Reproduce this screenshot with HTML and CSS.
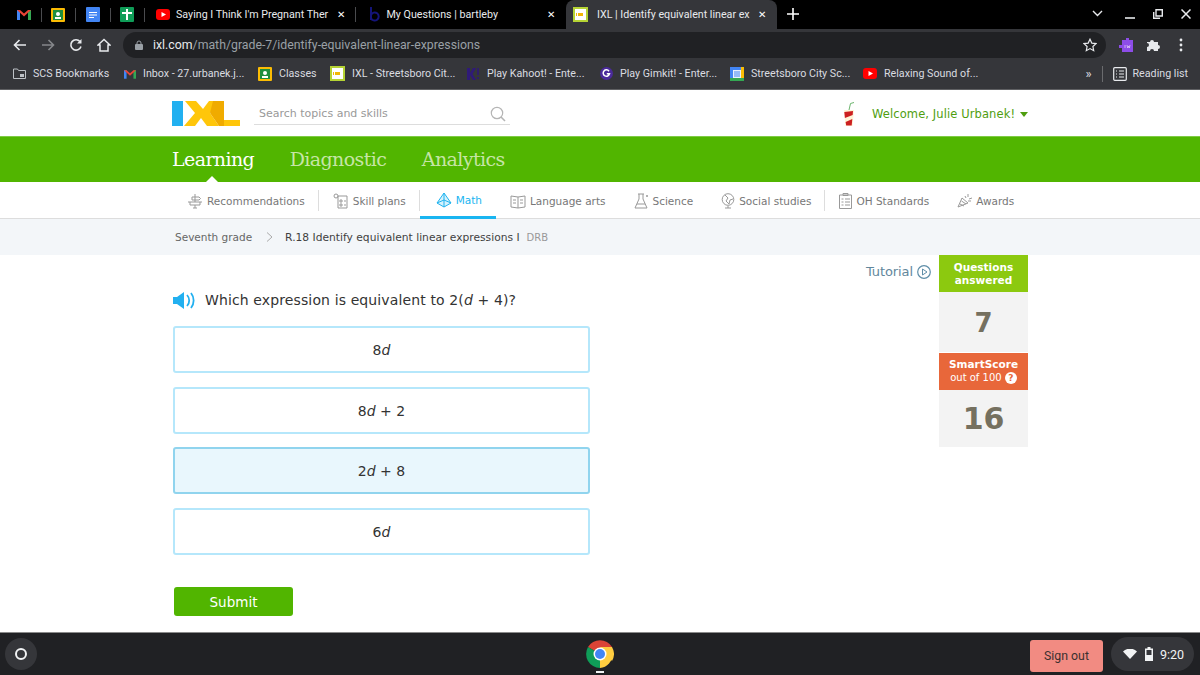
FILE: index.html
```html
<!DOCTYPE html>
<html lang="en">
<head>
  <meta charset="UTF-8">
  <title>IXL | Identify equivalent linear expressions</title>
  <link rel="stylesheet" href="styles.css">
</head>
<body>

  <!-- Browser tabs -->
  <div class="tabstrip">
    <div class="pinned">
      <svg width="14" height="11" viewBox="0 0 14 11"><path d="M0 11V1l3 0v10z" fill="#4285f4"/><path d="M11 11V1h3v10z" fill="#34a853"/><path d="M0 1h3l4 3.5L11 1h3L7 7.5z" fill="#ea4335"/></svg>
    </div>
    <div class="pinned">
      <svg width="14" height="14" viewBox="0 0 14 14"><rect width="14" height="14" rx="1" fill="#fbbc04"/><rect x="2" y="2" width="10" height="10" fill="#1e8e3e"/><circle cx="7" cy="6" r="2" fill="#fff"/><rect x="4" y="9" width="6" height="2" fill="#fff"/></svg>
    </div>
    <div class="pinned">
      <svg width="14" height="15" viewBox="0 0 14 15"><rect width="14" height="15" rx="1" fill="#4285f4"/><path d="M3 5h8v1H3zM3 7.500h8v1H3zM3 10h5v1H3z" fill="#fff"/></svg>
    </div>
    <div class="pinned">
      <svg width="14" height="15" viewBox="0 0 14 15"><rect width="14" height="15" rx="1" fill="#0f9d58"/><path d="M6 2h2v3h4v2H8v6H6V7H2V5h4z" fill="#fff"/></svg>
    </div>
    <div class="tab sep">
      <svg class="fav" width="14" height="11" viewBox="0 0 14 11"><rect width="14" height="11" rx="3" fill="#f00"/><path d="M5.500 3v5L10 5.500z" fill="#fff"/></svg>
      <span class="tab-title">Saying I Think I'm Pregnant Ther</span>
      <span class="tab-x">✕</span>
    </div>
    <div class="tab">
      <svg class="fav" width="14" height="16" viewBox="0 0 14 16"><path d="M4 1v13M4 9a4 4 0 1 1 0 3" fill="none" stroke="#14147a" stroke-width="2"/></svg>
      <span class="tab-title">My Questions | bartleby</span>
      <span class="tab-x">✕</span>
    </div>
    <div class="tab active">
      <svg class="fav" width="15" height="15" viewBox="0 0 15 15"><rect width="15" height="15" fill="#b5d334"/><rect x="2" y="2" width="11" height="11" fill="#fff"/><path d="M3 6h1v3H3zM5 6h5v3H5z" fill="#f2b705"/></svg>
      <span class="tab-title">IXL | Identify equivalent linear ex</span>
      <span class="tab-x">✕</span>
    </div>
    <svg class="new-tab" width="12" height="12" viewBox="0 0 12 12"><path d="M6 0v12M0 6h12" stroke="#fff" stroke-width="1.600"/></svg>
    <div class="win-btns">
      <svg class="win-list" width="11" height="7" viewBox="0 0 11 7"><path d="M1 1l4.500 4.500L10 1" fill="none" stroke="#e8eaed" stroke-width="1.400"/></svg>
      <svg width="10" height="10" viewBox="0 0 10 10"><path d="M0 9h10" stroke="#e8eaed" stroke-width="1.600"/></svg>
      <svg width="10" height="10" viewBox="0 0 10 10"><path d="M3 .7h6.300V7H3zM.7 3v6.300H7" fill="none" stroke="#e8eaed" stroke-width="1.400"/></svg>
      <svg width="10" height="10" viewBox="0 0 10 10"><path d="M.5.500l9 9M9.500.500l-9 9" stroke="#e8eaed" stroke-width="1.500"/></svg>
    </div>
  </div>

  <!-- Address bar -->
  <div class="toolbar">
    <svg class="tb-ico" width="14" height="12" viewBox="0 0 14 12"><path d="M13 6H2M6.500 1L1.500 6l5 5" fill="none" stroke="#e8eaed" stroke-width="1.600"/></svg>
    <svg class="tb-ico" width="14" height="12" viewBox="0 0 14 12"><path d="M1 6h11M7.500 1l5 5-5 5" fill="none" stroke="#85878a" stroke-width="1.600"/></svg>
    <svg class="tb-ico" width="14" height="14" viewBox="0 0 14 14"><path d="M12 8.500A5.200 5.200 0 1 1 11 3.500" fill="none" stroke="#e8eaed" stroke-width="1.600"/><path d="M12.500 1v4.500H8z" fill="#e8eaed"/></svg>
    <svg class="tb-ico" width="14" height="14" viewBox="0 0 14 14"><path d="M7 1.500L1 7h2v6h8V7h2z" fill="none" stroke="#e8eaed" stroke-width="1.500"/></svg>
    <div class="omnibox">
      <svg width="8" height="10" viewBox="0 0 8 10"><rect y="4" width="8" height="6" rx="1" fill="#9aa0a6"/><path d="M2 4V3a2 2 0 0 1 4 0v1" fill="none" stroke="#9aa0a6"/></svg>
      <span class="url"><span class="host">ixl.com</span>/math/grade-7/identify-equivalent-linear-expressions</span>
      <svg class="star" width="14" height="14" viewBox="0 0 14 14"><path d="M7 1.200l1.800 3.900 4.200.5-3.100 2.900.8 4.200L7 10.600l-3.700 2.100.8-4.200L1 5.600l4.200-.5z" fill="none" stroke="#e8eaed" stroke-width="1.200"/></svg>
    </div>
    <div class="ext">
      <svg width="16" height="16" viewBox="0 0 16 16"><path d="M3 3h4V1h3v2h4v12H3v-4H0V8h3z" fill="#8d4de8"/><path d="M6 11V8M8 8l.7 3 .8-2 .8 2 .7-3" fill="none" stroke="#e6d5fb" stroke-width=".7"/></svg>
      <svg width="14" height="14" viewBox="0 0 14 14"><path d="M1 4h3a2 2 0 0 1 4 0h4v3a2 2 0 0 1 0 4v2H8a2 2 0 0 0-4 0H1V9a2 2 0 0 0 0-4z" fill="#e8eaed"/></svg>
      <svg class="dots" width="4" height="14" viewBox="0 0 4 14"><circle cx="2" cy="2" r="1.400" fill="#e8eaed"/><circle cx="2" cy="7" r="1.400" fill="#e8eaed"/><circle cx="2" cy="12" r="1.400" fill="#e8eaed"/></svg>
    </div>
  </div>

  <!-- Bookmarks -->
  <div class="bookmarks">
    <div class="bm bm-scs">
      <svg width="13" height="11" viewBox="0 0 13 11"><path d="M.5 1h4l1 1.500h7v8H.5z" fill="none" stroke="#bdc1c6"/><rect x="7" y="6" width="4" height="3" fill="#bdc1c6"/></svg>
      SCS Bookmarks
    </div>
    <div class="bm bm-inbox">
      <svg width="12" height="10" viewBox="0 0 14 11"><path d="M0 11V1l3 0v10z" fill="#4285f4"/><path d="M11 11V1h3v10z" fill="#34a853"/><path d="M0 1h3l4 3.500L11 1h3L7 7.500z" fill="#ea4335"/></svg>
      Inbox - 27.urbanek.j...
    </div>
    <div class="bm bm-classes">
      <svg width="14" height="14" viewBox="0 0 14 14"><rect width="14" height="14" rx="1" fill="#fbbc04"/><rect x="2" y="2" width="10" height="10" fill="#1e8e3e"/><circle cx="7" cy="6" r="2" fill="#fff"/><rect x="4" y="9" width="6" height="2" fill="#fff"/></svg>
      Classes
    </div>
    <div class="bm bm-ixl">
      <svg width="15" height="15" viewBox="0 0 15 15"><rect width="15" height="15" fill="#b5d334"/><rect x="2" y="2" width="11" height="11" fill="#fff"/><path d="M3 6h1v3H3zM5 6h5v3H5z" fill="#f2b705"/></svg>
      IXL - Streetsboro Cit...
    </div>
    <div class="bm bm-kahoot">
      <svg width="14" height="14" viewBox="0 0 14 14"><path d="M1 1h3v5l3-5h3L6.500 7 10 13H7L4 8v5H1z" fill="#2f1a78"/><path d="M12 1v7M12 10v2" stroke="#2f1a78" stroke-width="1.600"/></svg>
      Play Kahoot! - Ente...
    </div>
    <div class="bm bm-gimkit">
      <svg width="13" height="13" viewBox="0 0 13 13"><circle cx="6.500" cy="6.500" r="6.500" fill="#4b2a9b"/><path d="M9 4.200a3.200 3.200 0 1 0 .5 2.600H6.800" fill="none" stroke="#fff" stroke-width="1.500"/></svg>
      Play Gimkit! - Enter...
    </div>
    <div class="bm bm-cal">
      <svg width="14" height="14" viewBox="0 0 14 14"><rect width="14" height="14" fill="#4285f4"/><rect x="11" width="3" height="11" fill="#fbbc04"/><rect y="11" width="14" height="3" fill="#34a853"/><rect x="3" y="3" width="8" height="8" fill="#e8f0fe"/><path d="M4 5h6M4 7h6M4 9h6" stroke="#4285f4"/></svg>
      Streetsboro City Sc...
    </div>
    <div class="bm bm-yt">
      <svg width="14" height="11" viewBox="0 0 14 11"><rect width="14" height="11" rx="3" fill="#f00"/><path d="M5.500 3v5L10 5.500z" fill="#fff"/></svg>
      Relaxing Sound of...
    </div>
    <div class="bm-end">
      <span class="more">»</span>
      <span class="bm-sep"></span>
      <svg width="14" height="14" viewBox="0 0 14 14"><rect x=".7" y=".7" width="12.600" height="12.600" rx="1" fill="none" stroke="#e8eaed" stroke-width="1.200"/><path d="M3 4h1M3 7h1M3 10h1M6 4h5M6 7h5M6 10h5" stroke="#e8eaed"/></svg>
      Reading list
    </div>
  </div>

  <!-- IXL header -->
  <header class="site-header">
    <svg class="logo" width="69" height="25" viewBox="0 0 69 25">
      <rect width="11" height="25" fill="#22b0f0"/>
      <path d="M13 0h11l7 8 6-8h10v25h21v-6H52V0h-5l-9 12 9 13H35l-6-8-6 8H12l11-13z" fill="#ffc60a"/>
      <path d="M41 0h11v25H47l-9-13z" fill="#f0ab00"/>
    </svg>
    <div class="search">
      <span>Search topics and skills</span>
      <svg width="16" height="16" viewBox="0 0 16 16"><circle cx="7" cy="7" r="5.700" fill="none" stroke="#b5b5b5" stroke-width="1.200"/><path d="M11 11l4 4" stroke="#b5b5b5" stroke-width="1.600"/></svg>
    </div>
    <div class="welcome">
      <svg width="14" height="27" viewBox="0 0 14 27">
        <path d="M7 9l1.500-6.500L12 1.500" fill="none" stroke="#6cb56e"/>
        <path d="M2 9h10l-1.500 16h-7z" fill="#fff4d6"/>
        <path d="M2.300 11l8.700-1-.3 4-7.800 3zM3.600 21l6.700-3-.6 6.500H4.200z" fill="#cc2020"/>
      </svg>
      <span class="welcome-name">Welcome, Julie Urbanek!</span>
      <span class="caret"></span>
    </div>
  </header>

  <nav class="main-nav">
    <a class="current">Learning</a>
    <a>Diagnostic</a>
    <a>Analytics</a>
  </nav>

  <nav class="sub-nav">
    <a class="sub-item divider">
      <svg width="16" height="16" viewBox="0 0 16 16"><path d="M1 9h14M3 9v3h10V9M8 1v8M5 4h7l1.500 1.500L12 7H5zM6 15h4M8 12v3" fill="none" stroke="#999"/></svg>
      Recommendations
    </a>
    <a class="sub-item divider">
      <svg width="16" height="16" viewBox="0 0 16 16"><path d="M5 3h9v12H5zM7 7h2v2H7zM7 11h2v2H7zM11 8h2M11 12h2" fill="none" stroke="#999"/><circle cx="3" cy="3" r="2" fill="none" stroke="#999"/></svg>
      Skill plans
    </a>
    <a class="sub-item on">
      <svg width="16" height="16" viewBox="0 0 16 16"><path d="M8 1l7 10-7 4-7-4zM8 1v14M1 11l7-3 7 3" fill="#d5f2fd" stroke="#1fb3ef"/></svg>
      Math
    </a>
    <a class="sub-item">
      <svg width="16" height="16" viewBox="0 0 16 16"><path d="M1 3l7 1 7-1v11l-7 1-7-1zM8 4v11M3 7h3M3 10h3M10 7h3M10 10h3" fill="none" stroke="#999"/></svg>
      Language arts
    </a>
    <a class="sub-item">
      <svg width="15" height="16" viewBox="0 0 15 16"><path d="M4 1h6M5 1v5l-4 9h12L9 6V1M3 11h8" fill="none" stroke="#999"/><circle cx="13" cy="3" r="1" fill="#999"/></svg>
      Science
    </a>
    <a class="sub-item divider">
      <svg width="14" height="16" viewBox="0 0 14 16"><circle cx="7" cy="6.500" r="5.800" fill="none" stroke="#999"/><path d="M4 2l3 3-2 3 3 3 1-4 3-1M7 13v2M4 15h6" fill="none" stroke="#999"/></svg>
      Social studies
    </a>
    <a class="sub-item">
      <svg width="13" height="16" viewBox="0 0 13 16"><path d="M.5 2h12v13.500H.5zM4 .5h5v2H4zM2.500 6h2M2.500 9h2M2.500 12h2M6 6h5M6 9h5M6 12h5" fill="none" stroke="#999"/></svg>
      OH Standards
    </a>
    <a class="sub-item">
      <svg width="15" height="16" viewBox="0 0 15 16"><path d="M1 14L5 5l6 5zM3 11l4 2M4.500 8L9 11M8 3l1 2M11 1v3M12 6l3-1M11 8h3" fill="none" stroke="#999"/></svg>
      Awards
    </a>
  </nav>

  <div class="crumbs">
    <span>Seventh grade</span>
    <svg width="7" height="10" viewBox="0 0 7 10"><path d="M1 .5L6 5 1 9.500" fill="none" stroke="#aaa"/></svg>
    <span class="skill">R.18 Identify equivalent linear expressions I</span>
    <span class="code">DRB</span>
  </div>

  <!-- Practice question -->
  <main class="practice">
    <section class="question">
      <div class="prompt">
        <svg width="22" height="17" viewBox="0 0 22 17"><path d="M0 5h4l7-5v17l-7-5H0z" fill="#22b0f0"/><path d="M14 3a8 8 0 0 1 0 11M18 1a12 12 0 0 1 0 15" fill="none" stroke="#22b0f0" stroke-width="1.800"/></svg>
        <span>Which expression is equivalent to 2(<i>d</i> + 4)?</span>
      </div>
      <div class="choices">
        <div class="choice">8<i>d</i></div>
        <div class="choice">8<i>d</i> + 2</div>
        <div class="choice selected">2<i>d</i> + 8</div>
        <div class="choice">6<i>d</i></div>
      </div>
      <button class="submit">Submit</button>
    </section>

    <a class="tutorial">Tutorial
      <svg width="14" height="14" viewBox="0 0 14 14"><circle cx="7" cy="7" r="6.300" fill="none" stroke="#5f8ea8" stroke-width="1.200"/><path d="M5.500 4v6L10 7z" fill="none" stroke="#5f8ea8"/></svg>
    </a>

    <aside class="stats">
      <div class="stat-head green">Questions<br>answered</div>
      <div class="stat-num count">7</div>
      <div class="stat-head orange">SmartScore
        <small>out of 100 <b class="help">?</b></small>
      </div>
      <div class="stat-num score">16</div>
    </aside>
  </main>

  <!-- OS shelf -->
  <footer class="shelf">
    <div class="launcher"><span class="ring"></span></div>
    <div class="chrome-app">
      <svg width="28" height="28" viewBox="0 0 28 28">
        <path d="M14 14L2 7a14 14 0 0 1 24 0z" fill="#db4437"/>
        <path d="M14 14L2 7a14 14 0 0 0 12 21z" fill="#0f9d58"/>
        <path d="M14 14h12.600a14 14 0 0 1 -12.600 14z" fill="#ffcd40"/>
        <path d="M14 7h12a14 14 0 0 1 0 14z" fill="#ffcd40"/>
        <circle cx="14" cy="14" r="6.500" fill="#fff"/>
        <circle cx="14" cy="14" r="5" fill="#4285f4"/>
      </svg>
      <span class="app-dot"></span>
    </div>
    <button class="sign-out">Sign out</button>
    <div class="tray">
      <svg class="wifi" width="14" height="10" viewBox="0 0 14 10"><path d="M0 2.500a10 10 0 0 1 14 0L7 10z" fill="#f1f3f4"/></svg>
      <svg class="batt" width="8" height="14" viewBox="0 0 8 14"><path d="M2.500 0h3v1.500H8V14H0V1.500h2.500z" fill="#f1f3f4"/><rect x="1.500" y="3" width="5" height="5" fill="#35363a"/></svg>
      <span>9:20</span>
    </div>
  </footer>

</body>
</html>
```

FILE: styles.css
```css
* {
  box-sizing: border-box;
}

html, body {
  margin: 0;
  height: 675px;
  overflow: hidden;
}

body {
  display: flex;
  flex-direction: column;
  background-color: #fff;
  font-family: "DejaVu Sans", sans-serif;
  font-size: 11px;
  color: #555;
}

/* browser chrome */
.tabstrip {
  height: 29px;
  flex: none;
  display: flex;
  align-items: center;
  padding-left: 7px;
  background-color: #000;
  font-family: Roboto, sans-serif;
  font-size: 10.700px;
  color: #e8eaed;
}

.pinned {
  width: 34.500px;
  height: 14px;
  display: flex;
  align-items: center;
  justify-content: center;
  border-right: 1px solid #4a4b4e;
}

.tab {
  width: 210.500px;
  height: 29px;
  display: flex;
  align-items: center;
  padding: 0 8px 1px 11px;
  position: relative;
}

.tab.sep::after {
  content: "";
  position: absolute;
  right: 0;
  top: 7px;
  height: 15px;
  border-right: 1px solid #4a4b4e;
}

.tab.active {
  background-color: #35363a;
  border-radius: 8px 8px 0 0;
  padding-left: 7px;
}

.fav {
  flex: none;
  margin-right: 6px;
}

.tab.active .fav {
  margin-right: 9px;
}

.tab-title {
  flex: 1;
  white-space: nowrap;
}

.tab-x {
  flex: none;
  width: 14px;
  font-size: 10px;
  color: #fff;
  text-align: center;
}

.new-tab {
  margin: 0 0 2px 10px;
}

.win-btns {
  margin-left: auto;
  display: flex;
  align-items: center;
  gap: 18px;
  padding: 0 9px 2px 0;
}

.win-list {
  margin-right: 4px;
}

.toolbar {
  height: 32px;
  flex: none;
  display: flex;
  align-items: center;
  padding: 0 17px 0 13px;
  background-color: #35363a;
}

.tb-ico {
  flex: none;
  margin-right: 14px;
}

.omnibox {
  flex: 1;
  height: 26px;
  margin: 0 13px 0 -2px;
  display: flex;
  align-items: center;
  padding: 0 9px 0 12px;
  border-radius: 13px;
  background-color: #202124;
  font-family: Roboto, sans-serif;
  font-size: 12.300px;
  color: #9aa0a6;
}

.url {
  margin-left: 10px;
}

.host {
  color: #e8eaed;
}

.star {
  margin-left: auto;
}

.ext {
  display: flex;
  align-items: center;
  gap: 11px;
}

.dots {
  margin-left: 8px;
}

.bookmarks {
  height: 29px;
  flex: none;
  display: flex;
  align-items: center;
  padding: 0 12px 3px 13px;
  background-color: #35363a;
  border-bottom: 1px solid #5f6063;
  font-family: Roboto, sans-serif;
  font-size: 10.700px;
  color: #dadce0;
}

.bm {
  display: flex;
  align-items: center;
  gap: 7px;
  white-space: nowrap;
}

.bm-scs { width: 111px; }
.bm-inbox { width: 134px; }
.bm-classes { width: 72px; }
.bm-ixl { width: 136px; }
.bm-kahoot { width: 134px; }
.bm-gimkit { width: 130px; }
.bm-cal { width: 133px; }

.bm-end {
  margin-left: auto;
  display: flex;
  align-items: center;
  gap: 6px;
}

.more {
  font-size: 13px;
  margin-right: 4px;
}

.bm-sep {
  height: 16px;
  margin-right: 4px;
  border-left: 1px solid #6a6b6e;
}

/* IXL header */
.site-header {
  height: 46px;
  flex: none;
  display: flex;
  align-items: center;
  padding-left: 172px;
}

.logo {
  flex: none;
  margin-top: 1px;
}

.search {
  width: 256px;
  height: 24px;
  margin: 0 0 0 13px;
  padding: 2px 4px 0 5px;
  display: flex;
  align-items: center;
  justify-content: space-between;
  border-bottom: 1px solid #ddd;
  color: #999;
}

.welcome {
  margin: 2px 0 0 332px;
  display: flex;
  align-items: center;
  color: #4f9e0f;
  font-size: 11.500px;
}

.welcome-name {
  margin: 0 5px 0 16px;
  letter-spacing: .1px;
}

.caret {
  width: 0;
  height: 0;
  border: 4.500px solid transparent;
  border-top: 5px solid #4f9e0f;
  border-bottom: 0;
}

.main-nav {
  height: 46px;
  flex: none;
  display: flex;
  align-items: center;
  gap: 35.500px;
  padding-left: 172px;
  background-color: #51b500;
  border-top: 1px solid #7fcb45;
  font-family: "DejaVu Serif", serif;
  font-size: 19px;
  color: #c6e5a6;
}

.main-nav a {
  position: relative;
  line-height: 45px;
  letter-spacing: -.6px;
}

.main-nav .current {
  color: #fff;
}

.main-nav .current::after {
  content: "";
  position: absolute;
  left: 34px;
  bottom: 0;
  border: 6px solid transparent;
  border-bottom: 6px solid #fff;
  border-top: 0;
}

.sub-nav {
  height: 37px;
  flex: none;
  display: flex;
  padding-left: 173px;
  border-bottom: 1px solid #ddd;
  color: #777;
  font-size: 10.500px;
}

.sub-item {
  height: 36px;
  display: flex;
  align-items: center;
  gap: 4px;
  padding: 2px 14px 0;
  position: relative;
  white-space: nowrap;
}

.divider::after {
  content: "";
  position: absolute;
  right: 0;
  top: 8px;
  height: 21px;
  border-right: 1px solid #ddd;
}

.sub-item.on {
  color: #19b5f1;
  padding-left: 16px;
  height: 37px;
  border-bottom: 3px solid #19b5f1;
}

.crumbs {
  height: 36px;
  flex: none;
  display: flex;
  align-items: center;
  padding-left: 175px;
  background-color: #f3f6f9;
  color: #666;
  font-size: 10.500px;
}

.crumbs svg {
  margin: 0 12px 0 14px;
}

.skill {
  color: #3f3f3f;
  font-size: 10.700px;
}

.code {
  margin-left: 7px;
  font-size: 10px;
  color: #999;
}

/* practice area */
.practice {
  flex: 1;
  display: flex;
  align-items: flex-start;
  padding-left: 173px;
}

.question {
  width: 417px;
  padding-top: 36px;
}

.prompt {
  height: 18px;
  display: flex;
  align-items: center;
  gap: 10px;
  font-size: 14px;
  letter-spacing: .12px;
  color: #333;
}

.choices {
  margin-top: 17px;
  display: flex;
  flex-direction: column;
  gap: 14px;
}

.choice {
  height: 47px;
  display: flex;
  align-items: center;
  justify-content: center;
  white-space: pre;
  border: 2px solid #b5e7fb;
  border-radius: 3px;
  font-size: 14px;
  color: #333;
}

.choice.selected {
  margin-top: -1px;
  background-color: #e9f7fd;
  border-color: #90d4ee;
}

.submit {
  display: block;
  width: 119px;
  height: 29px;
  margin: 32px 0 0 1px;
  padding: 0;
  border: none;
  border-radius: 3px;
  background-color: #51b500;
  color: #fff;
  font-family: "DejaVu Sans", sans-serif;
  font-size: 13.500px;
}

.tutorial {
  margin: 9px 0 0 276px;
  width: 73px;
  display: flex;
  align-items: center;
  gap: 4px;
  flex: none;
  font-size: 13px;
  letter-spacing: -.1px;
  color: #62879c;
  white-space: nowrap;
}

.stats {
  width: 89px;
  flex: none;
  text-align: center;
  color: #fff;
  font-weight: bold;
  font-size: 10.500px;
}

.stat-head {
  line-height: 13px;
}

.stat-head.green {
  height: 37px;
  padding-top: 6px;
  background-color: #8cc90f;
}

.stat-head.orange {
  height: 37px;
  margin-top: 1px;
  padding-top: 5px;
  background-color: #e8673a;
}

.stat-head small {
  display: block;
  font-weight: normal;
  font-size: 10px;
}

.help {
  display: inline-block;
  width: 12px;
  height: 12px;
  border-radius: 50%;
  background-color: #fff;
  color: #e8673a;
  font-size: 9px;
  line-height: 12px;
  font-weight: bold;
}

.stat-num {
  background-color: #f3f3f3;
  color: #75705f;
}

.count {
  height: 60px;
  font-size: 26px;
  line-height: 62px;
}

.score {
  height: 57px;
  font-size: 30px;
  line-height: 58px;
}

/* shelf */
.shelf {
  height: 43px;
  flex: none;
  display: flex;
  align-items: center;
  padding: 0 6px 0 5px;
  background-color: #202124;
  border-top: 1px solid #8a8a8a;
  font-family: Roboto, sans-serif;
  font-size: 12.500px;
  color: #f1f3f4;
}

.launcher {
  width: 32px;
  height: 32px;
  display: flex;
  align-items: center;
  justify-content: center;
  border-radius: 50%;
  background-color: #35363a;
}

.ring {
  width: 12px;
  height: 12px;
  border: 2px solid #f1f3f4;
  border-radius: 50%;
}

.chrome-app {
  margin-left: 549px;
  height: 42px;
  display: flex;
  flex-direction: column;
  align-items: center;
  padding-top: 7px;
}

.app-dot {
  width: 8px;
  height: 2px;
  margin-top: 3px;
  background-color: #f1f3f4;
}

.sign-out {
  width: 73px;
  height: 32px;
  margin: 4px 0 0 auto;
  border: none;
  border-radius: 3px;
  background-color: #f28b82;
  color: #3c3030;
  font-family: Roboto, sans-serif;
  font-size: 12.300px;
}

.tray {
  width: 83px;
  height: 34px;
  margin-left: 8px;
  display: flex;
  align-items: center;
  padding-left: 12px;
  border-radius: 17px;
  background-color: #35363a;
}

.wifi {
  margin-right: 8px;
}

.batt {
  margin-right: 7px;
}
```
